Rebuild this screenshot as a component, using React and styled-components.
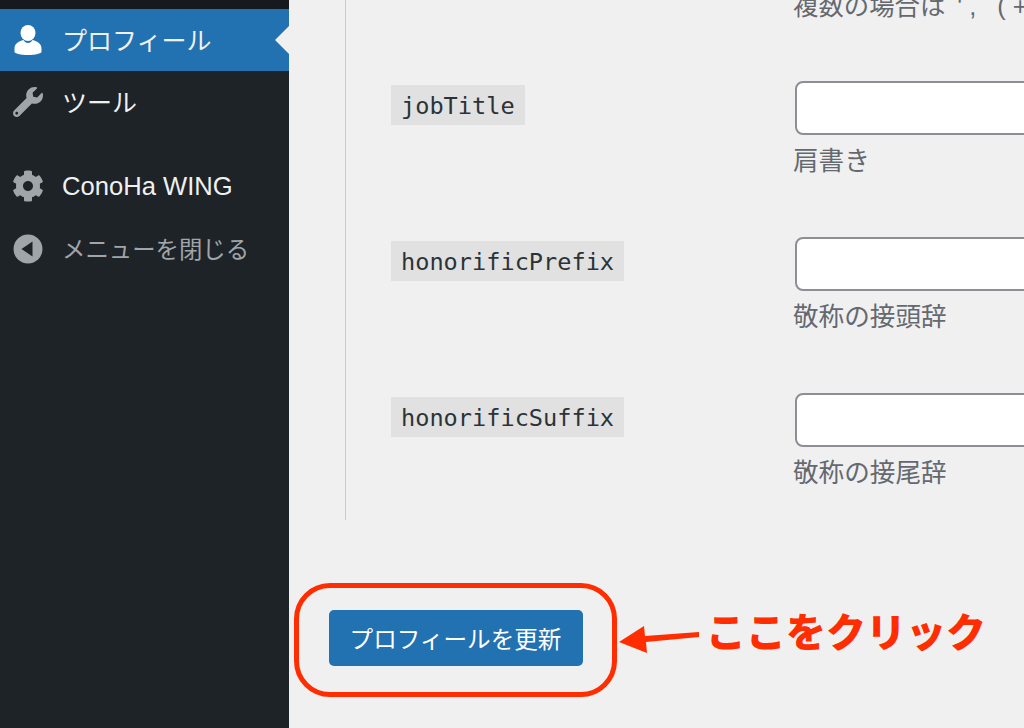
import React from 'react'
import styled, { createGlobalStyle } from 'styled-components'
import { FaWrench, FaCog } from 'react-icons/fa'

const sans = `"Liberation Sans", "Noto Sans CJK JP", sans-serif`

const GlobalStyle = createGlobalStyle`
  html, body {
    margin: 0;
    padding: 0;
    background: #f0f0f1;
  }
  #root {
    width: 1024px;
    height: 728px;
    overflow: hidden;
  }
`

const Page = styled.div`
  display: flex;
  width: 1024px;
  height: 728px;
  overflow: hidden;
  font-family: ${sans};
  background: #f0f0f1;
`

const Sidebar = styled.nav`
  flex: 0 0 289px;
  background: #1d2327;
`

const TopStrip = styled.div`
  height: 9px;
  background: #16191d;
`

const MenuItem = styled.div`
  position: relative;
  display: flex;
  align-items: center;
  height: ${({ $height }) => $height || 62}px;
  margin-bottom: ${({ $gap }) => $gap || 0}px;
  padding-left: 12px;
  background: ${({ $active }) => ($active ? '#2271b1' : 'transparent')};
  color: ${({ $muted }) => ($muted ? '#a0a5aa' : '#f0f0f1')};

  ${({ $active }) =>
    $active &&
    `
    &::after {
      content: '';
      position: absolute;
      right: 0;
      top: 50%;
      margin-top: -14px;
      border: 14px solid transparent;
      border-left: 0;
      border-right-color: #f0f0f1;
    }
  `}
`

const MenuLabel = styled.span`
  font-size: ${({ $size }) => $size || 25}px;
  line-height: 1;
  margin-top: ${({ $drop }) => $drop ?? 2}px;
`

const IconSlot = styled.span`
  display: flex;
  justify-content: center;
  align-items: center;
  width: 32px;
  margin-right: 18px;
  color: #a0a5aa;
`

const MainArea = styled.main`
  flex: 1;
  min-width: 0;
  display: flex;
  flex-direction: column;
`

const FieldGroup = styled.div`
  height: 520px;
  margin-left: 56px;
  padding-left: 45px;
  border-left: 1px solid #c8cacc;
  box-sizing: border-box;
`

const FieldRow = styled.div`
  display: grid;
  grid-template-columns: 404px 320px;
  height: 156px;
`

const NoteRow = styled(FieldRow)`
  height: 81px;
`

const Note = styled.p`
  grid-column: 2;
  margin: -12px 0 0 -2px;
  font-size: 25.4px;
  line-height: 36px;
  color: #646970;
  white-space: nowrap;
`

const NoteExample = styled.span`
  margin-left: 12px;
  letter-spacing: 7px;
`

const CodeChip = styled.code`
  justify-self: start;
  align-self: start;
  margin-top: 4px;
  padding: 0 10px;
  height: 40px;
  line-height: 42px;
  background: #e1e1e1;
  color: #2c3338;
  font-family: "DejaVu Sans Mono", monospace;
  font-size: 23.6px;
`

const FieldColumn = styled.div`
  display: flex;
  flex-direction: column;
  align-items: flex-start;
`

const TextBox = styled.input`
  width: 320px;
  height: 54px;
  box-sizing: border-box;
  border: 2px solid #8c8f94;
  border-radius: 8px;
  background: #fff;
`

const Description = styled.span`
  margin: 8px 0 0 -2px;
  font-size: 25.6px;
  line-height: 36px;
  color: #646970;
`

const Footer = styled.div`
  display: flex;
  align-items: center;
  margin: 63px 0 0 5px;
`

const Highlight = styled.div`
  display: flex;
  justify-content: center;
  align-items: center;
  width: 323px;
  height: 114px;
  padding-bottom: 4px;
  box-sizing: border-box;
  border: 5px solid #ff2d00;
  border-radius: 36px;
`

const SubmitButton = styled.button`
  width: 254px;
  height: 56px;
  padding: 0;
  border: 0;
  border-radius: 5px;
  background: #2271b1;
  color: #fff;
  font-family: ${sans};
  font-size: 23.6px;
`

const ArrowIcon = styled.svg`
  flex: none;
  margin-left: 1px;
`

const Callout = styled.span`
  margin: 0 0 20px 7px;
  color: #ff2d00;
  font-family: "Noto Sans CJK JP", sans-serif;
  font-weight: 900;
  font-size: 40px;
  line-height: 1;
  white-space: nowrap;
`

function UserIcon() {
  return (
    <svg width="28" height="30" viewBox="0 0 28 30" fill="#fff">
      <ellipse cx="14" cy="8" rx="7.5" ry="8" />
      <path d="M9.5 15c-5 1.500-9 3.500-9 8.500v3.500c0 1.500 6 3 13.500 3s13.500-1.500 13.500-3v-3.500c0-5-4-7-9-8.500-1 1.700-2.700 3-4.500 3s-3.500-1.300-4.500-3z" />
    </svg>
  )
}

function CollapseIcon() {
  return (
    <svg width="30" height="30" viewBox="0 0 30 30">
      <circle cx="15" cy="15" r="14.500" fill="#a0a5aa" />
      <path d="M19.500 7.500v15L8.500 15z" fill="#1d2327" />
    </svg>
  )
}

const fields = [
  { name: 'jobTitle', label: '肩書き' },
  { name: 'honorificPrefix', label: '敬称の接頭辞' },
  { name: 'honorificSuffix', label: '敬称の接尾辞' }
]

export default function App() {
  return (
    <Page>
      <GlobalStyle />
      <Sidebar>
        <TopStrip />
        <MenuItem $active>
          <IconSlot>
            <UserIcon />
          </IconSlot>
          <MenuLabel>プロフィール</MenuLabel>
        </MenuItem>
        <MenuItem $gap={22}>
          <IconSlot>
            <FaWrench size={30} />
          </IconSlot>
          <MenuLabel>ツール</MenuLabel>
        </MenuItem>
        <MenuItem>
          <IconSlot>
            <FaCog size={32} />
          </IconSlot>
          <MenuLabel $size={25.6}>ConoHa WING</MenuLabel>
        </MenuItem>
        <MenuItem $muted $height={64}>
          <IconSlot>
            <CollapseIcon />
          </IconSlot>
          <MenuLabel $size={23.4} $drop={4}>メニューを閉じる</MenuLabel>
        </MenuItem>
      </Sidebar>
      <MainArea>
        <FieldGroup>
          <NoteRow>
            <Note>
              複数の場合は<NoteExample>', (+81</NoteExample>
            </Note>
          </NoteRow>
          {fields.map(field => (
            <FieldRow key={field.name}>
              <CodeChip>{field.name}</CodeChip>
              <FieldColumn>
                <TextBox type="text" />
                <Description>{field.label}</Description>
              </FieldColumn>
            </FieldRow>
          ))}
        </FieldGroup>
        <Footer>
          <Highlight>
            <SubmitButton type="button">プロフィールを更新</SubmitButton>
          </Highlight>
          <ArrowIcon width="81" height="30" viewBox="0 0 81 30">
            <path d="M1 17L26 1l1 10 54-4v5l-53 5 1 11z" fill="#ff2d00" />
          </ArrowIcon>
          <Callout>ここをクリック</Callout>
        </Footer>
      </MainArea>
    </Page>
  )
}
